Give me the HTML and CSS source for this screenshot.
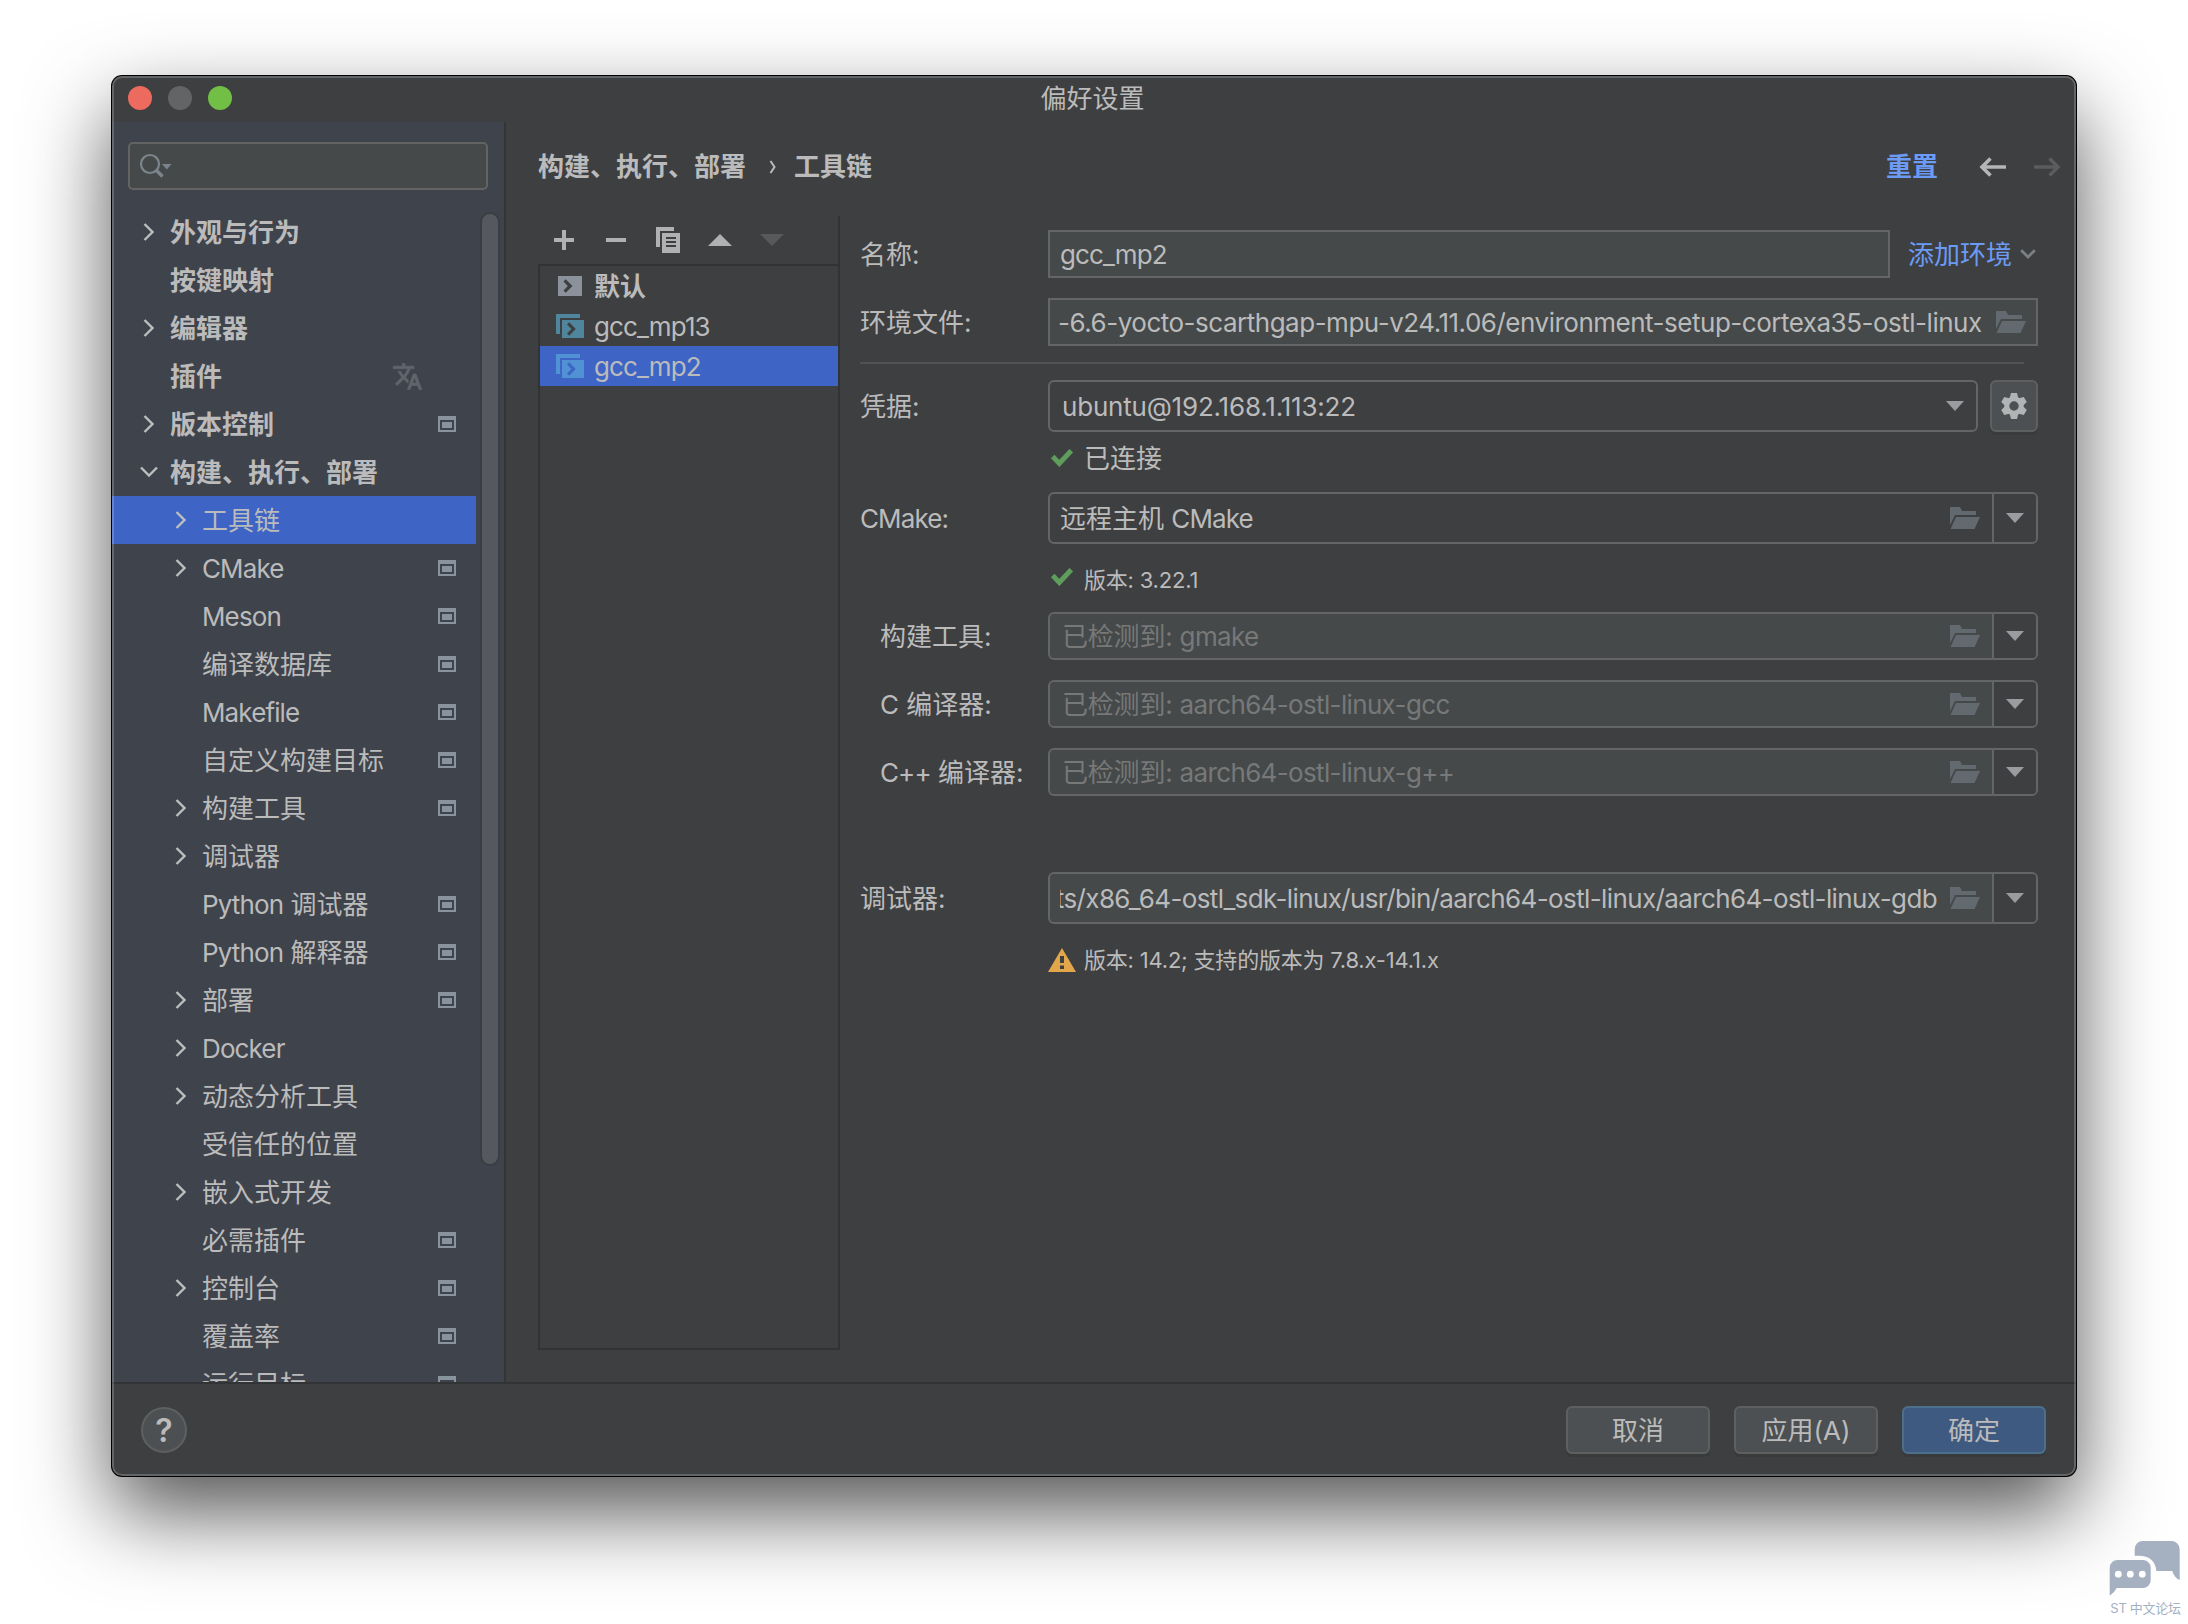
FILE: index.html
```html
<!DOCTYPE html>
<html lang="zh-CN">
<head>
<meta charset="utf-8">
<title>偏好设置</title>
<link rel="stylesheet" href="styles.css">
</head>
<body>
<svg class="defs" width="0" height="0">
  <symbol id="right" viewBox="0 0 12 20"><path d="M1.5 2l8 8-8 8" fill="none" stroke="currentColor" stroke-width="2.4"/></symbol>
  <symbol id="down" viewBox="0 0 20 12"><path d="M2 1.5l8 8 8-8" fill="none" stroke="currentColor" stroke-width="2.4"/></symbol>
  <symbol id="scope" viewBox="0 0 18 16"><path fill-rule="evenodd" fill="currentColor" d="M0 0h18v16H0zM2 4v10h14V4z"/><path fill="currentColor" d="M4 6h10v6H4z"/></symbol>
  <symbol id="folder" viewBox="0 0 30 22"><path fill="currentColor" d="M0 0h10l2 4h14v4H5L0 18zM6 10h24l-5.5 12H.5z"/></symbol>
  <symbol id="tri" viewBox="0 0 18 10"><path fill="currentColor" d="M0 0h18L9 10z"/></symbol>
  <symbol id="check" viewBox="0 0 22 18"><path fill="none" stroke="#5e9d5b" stroke-width="5" d="M1.7 7.5L8.3 14.5 20.3 1.7"/></symbol>
  <symbol id="chain" viewBox="0 0 28 24"><path fill="currentColor" d="M0 0h24v4H4v16H0z"/><path fill="currentColor" fill-rule="evenodd" d="M6 6h22v18H6zM11 10.5l4.4 4.5-4.4 4.5 2.2 2.2 6.6-6.7-6.6-6.7z"/></symbol>
</svg>

<div class="window">
  <div class="titlebar">
    <div class="lights"><i class="red"></i><i class="gray"></i><i class="green"></i></div>
    <h1>偏好设置</h1>
  </div>

  <div class="content">
    <nav class="sidebar">
      <div class="search">
        <svg width="34" height="26" viewBox="0 0 34 26"><circle cx="11" cy="11" r="9" fill="none" stroke="#7d858c" stroke-width="2.2"/><path d="M17 17l6.5 6.5" stroke="#7d858c" stroke-width="3.4"/><path d="M23 11h9.500l-4.700 5.500z" fill="#7d858c"/></svg>
      </div>
      <ul class="tree">
        <li class="top"><svg class="ar"><use href="#right"/></svg><span>外观与行为</span></li>
        <li class="top"><span>按键映射</span></li>
        <li class="top"><svg class="ar"><use href="#right"/></svg><span>编辑器</span></li>
        <li class="top"><span>插件</span><svg class="lang" viewBox="0 0 24 24"><path d="M12.87 15.07l-2.540-2.510.030-.030A17.520 17.520 0 0 0 14.070 6H17V4h-7V2H8v2H1v2h11.170C11.500 7.920 10.440 9.750 9 11.350 8.070 10.320 7.300 9.190 6.690 8h-2c.730 1.630 1.730 3.170 2.980 4.560l-5.090 5.020L4 19l5-5 3.110 3.110.760-2.040zM18.500 10h-2L12 22h2l1.120-3h4.750L21 22h2l-4.500-12zm-2.620 7l1.620-4.330L19.120 17h-3.240z"/></svg></li>
        <li class="top"><svg class="ar"><use href="#right"/></svg><span>版本控制</span><svg class="sc"><use href="#scope"/></svg></li>
        <li class="top"><svg class="ar open"><use href="#down"/></svg><span>构建、执行、部署</span></li>
        <li class="selected"><svg class="ar"><use href="#right"/></svg><span>工具链</span></li>
        <li><svg class="ar"><use href="#right"/></svg><span class="en">CMake</span><svg class="sc"><use href="#scope"/></svg></li>
        <li><span class="en">Meson</span><svg class="sc"><use href="#scope"/></svg></li>
        <li><span>编译数据库</span><svg class="sc"><use href="#scope"/></svg></li>
        <li><span class="en">Makefile</span><svg class="sc"><use href="#scope"/></svg></li>
        <li><span>自定义构建目标</span><svg class="sc"><use href="#scope"/></svg></li>
        <li><svg class="ar"><use href="#right"/></svg><span>构建工具</span><svg class="sc"><use href="#scope"/></svg></li>
        <li><svg class="ar"><use href="#right"/></svg><span>调试器</span></li>
        <li><span><em>Python</em> 调试器</span><svg class="sc"><use href="#scope"/></svg></li>
        <li><span><em>Python</em> 解释器</span><svg class="sc"><use href="#scope"/></svg></li>
        <li><svg class="ar"><use href="#right"/></svg><span>部署</span><svg class="sc"><use href="#scope"/></svg></li>
        <li><svg class="ar"><use href="#right"/></svg><span class="en">Docker</span></li>
        <li><svg class="ar"><use href="#right"/></svg><span>动态分析工具</span></li>
        <li><span>受信任的位置</span></li>
        <li><svg class="ar"><use href="#right"/></svg><span>嵌入式开发</span></li>
        <li><span>必需插件</span><svg class="sc"><use href="#scope"/></svg></li>
        <li><svg class="ar"><use href="#right"/></svg><span>控制台</span><svg class="sc"><use href="#scope"/></svg></li>
        <li><span>覆盖率</span><svg class="sc"><use href="#scope"/></svg></li>
        <li><span>运行目标</span><svg class="sc"><use href="#scope"/></svg></li>
      </ul>
      <div class="scrollbar"></div>
    </nav>

    <main>
      <header class="crumbs">
        <b>构建、执行、部署</b>
        <svg class="sep" width="8" height="14" viewBox="0 0 8 14"><path d="M1.500 1l4 6-4 6" fill="none" stroke="#bbb" stroke-width="2"/></svg>
        <b>工具链</b>
        <a class="reset">重置</a>
        <svg class="back" width="28" height="20" viewBox="0 0 28 20"><path d="M27 10H3M11.500 1.500L3 10l8.500 8.500" fill="none" stroke="#b4b5b6" stroke-width="3.600"/></svg>
        <svg class="fwd" width="28" height="20" viewBox="0 0 28 20"><path d="M1 10h24M16.500 1.500L25 10l-8.500 8.500" fill="none" stroke="#5b5c5d" stroke-width="3.600"/></svg>
      </header>

      <div class="panes">
        <section class="list">
          <div class="tools">
            <svg width="20" height="20"><path d="M8 0h4v8h8v4h-8v8H8v-8H0V8h8z" fill="#afb1b3"/></svg>
            <svg width="20" height="20"><path d="M0 8h20v4H0z" fill="#afb1b3"/></svg>
            <svg width="24" height="26"><path fill="#afb1b3" fill-rule="evenodd" d="M0 0h18v4H4v16H0zM6 6h18v20H6zM10 10v2h10v-2zM10 14v2h10v-2zM10 18v2h10v-2z"/></svg>
            <svg width="24" height="12"><path d="M0 12h24L12 0z" fill="#afb1b3"/></svg>
            <svg width="24" height="12"><path d="M0 0h24L12 12z" fill="#58595a"/></svg>
          </div>
          <div class="items">
            <div class="item first"><svg width="24" height="20"><path fill="#8b929b" fill-rule="evenodd" d="M0 0h24v20H0zM5.500 5.500l4.300 4.500-4.300 4.500L7.700 16.700 14.500 10 7.700 3.300z"/></svg><b>默认</b></div>
            <div class="item"><svg width="28" height="24" color="#4f869e"><use href="#chain"/></svg><span class="en">gcc_mp13</span></div>
            <div class="item on"><svg width="28" height="24" color="#5192d4"><use href="#chain"/></svg><span class="en">gcc_mp2</span></div>
          </div>
        </section>

        <section class="form">
          <div class="row name">
            <label>名称:</label>
            <div class="field"><span class="en">gcc_mp2</span></div>
            <a class="add"><span>添加环境</span><svg width="16" height="10" viewBox="0 0 16 10"><path d="M1.200 1.200L8 8l6.800-6.800" fill="none" stroke="#7b8085" stroke-width="2.800"/></svg></a>
          </div>
          <div class="row env">
            <label>环境文件:</label>
            <div class="field"><span class="envtext">-6.6-yocto-scarthgap-mpu-v24.11.06/environment-setup-cortexa35-ostl-linux</span><svg class="fo"><use href="#folder"/></svg></div>
          </div>
          <hr>
          <div class="row tall cred">
            <label>凭据:</label>
            <div class="field combo"><span class="host">ubuntu@192.168.1.113:22</span><svg class="tr"><use href="#tri"/></svg></div>
            <button class="gear" aria-label="设置"><svg width="28" height="28" viewBox="-14 -14 28 28" fill="#b2b3b4"><circle r="7.200" fill="none" stroke="#b2b3b4" stroke-width="5"/><path id="t" d="M-3-13h6l1.200 5h-8.400z"/><use href="#t" transform="rotate(60)"/><use href="#t" transform="rotate(120)"/><use href="#t" transform="rotate(180)"/><use href="#t" transform="rotate(240)"/><use href="#t" transform="rotate(300)"/></svg></button>
          </div>
          <div class="status connected"><svg class="ck"><use href="#check"/></svg><span>已连接</span></div>
          <div class="row tall cmake">
            <label><em>CMake</em>:</label>
            <div class="field split"><span class="val">远程主机 <em>CMake</em></span><svg class="fo"><use href="#folder"/></svg><i><svg class="tr"><use href="#tri"/></svg></i></div>
          </div>
          <div class="status small ver"><svg class="ck"><use href="#check"/></svg><span>版本: 3.22.1</span></div>
          <div class="row sub build">
            <label>构建工具:</label>
            <div class="field split dark"><span class="val hint">已检测到: <em>gmake</em></span><svg class="fo"><use href="#folder"/></svg><i><svg class="tr"><use href="#tri"/></svg></i></div>
          </div>
          <div class="row sub next">
            <label>C 编译器:</label>
            <div class="field split dark"><span class="val hint">已检测到: <em>aarch64-ostl-linux-gcc</em></span><svg class="fo"><use href="#folder"/></svg><i><svg class="tr"><use href="#tri"/></svg></i></div>
          </div>
          <div class="row sub next">
            <label><em>C++</em> 编译器:</label>
            <div class="field split dark"><span class="val hint">已检测到: <em>aarch64-ostl-linux-g++</em></span><svg class="fo"><use href="#folder"/></svg><i><svg class="tr"><use href="#tri"/></svg></i></div>
          </div>
          <div class="row tall debug">
            <label>调试器:</label>
            <div class="field split dark"><span class="val path"><span>ts/x86_64-ostl_sdk-linux/usr/bin/aarch64-ostl-linux/aarch64-ostl-linux-gdb</span></span><svg class="fo"><use href="#folder"/></svg><i><svg class="tr"><use href="#tri"/></svg></i></div>
          </div>
          <div class="status small warn"><svg width="28" height="24" viewBox="0 0 28 24"><path d="M14 0l14 24H0z" fill="#e2a64b"/><path d="M12 8h4v7h-4zM12 17.500h4v3.500h-4z" fill="#3e3f41"/></svg><span>版本: 14.2; 支持的版本为 7.8.x-14.1.x</span></div>
        </section>
      </div>
    </main>
  </div>

  <footer>
    <button class="help">?</button>
    <button class="btn">取消</button>
    <button class="btn">应用(A)</button>
    <button class="btn primary">确定</button>
  </footer>
</div>

<div class="badge">
  <svg width="72" height="58" viewBox="0 0 72 58" fill="#a5b1c1">
    <path d="M34 0h28.500a8.200 8.200 0 0 1 8.200 8.200V39q-5.500-2.500-7.500-9H47.300Q46 15.500 31 14.700h-5.300V8.200A8.200 8.200 0 0 1 34 0z"/>
    <path d="M8.500 19h25.400a7.800 7.800 0 0 1 7.800 7.800v12.400a7.800 7.800 0 0 1-7.800 7.800H7.700Q5.500 51.500.7 54.700V26.800A7.800 7.800 0 0 1 8.500 19z"/>
    <g fill="#fff"><circle cx="9.300" cy="33.200" r="3.400"/><circle cx="21.300" cy="33.200" r="3.400"/><circle cx="33.300" cy="33.200" r="3.400"/></g>
  </svg>
  <span>ST 中文论坛</span>
</div>
</body>
</html>
```

FILE: styles.css
```css
* { box-sizing: border-box; }
body {
  margin: 0;
  width: 2188px;
  height: 1624px;
  padding: 76px 0 0 112px;
  background: #fff;
  overflow: hidden;
  position: relative;
  font: 26px/36px Inter, "Noto Sans CJK SC", sans-serif;
  color: #bbb;
}
.defs { position: absolute; }
svg { display: block; flex: none; }
em { font-style: normal; }
.en, em { letter-spacing: -0.88px; }
button { font: inherit; color: inherit; padding: 0; }

.window {
  position: relative;
  width: 1964px;
  height: 1400px;
  display: flex;
  flex-direction: column;
  background: #3e3f41;
  border-radius: 10px;
  overflow: hidden;
  box-shadow: 0 0 0 1px #000, 0 36px 84px rgba(0, 0, 0, .68);
}
.window::after {
  content: "";
  position: absolute;
  inset: 0;
  border: 2px solid rgba(255, 255, 255, .2);
  border-radius: 10px;
  pointer-events: none;
}
.titlebar {
  height: 46px;
  flex: none;
  display: grid;
  grid-template-columns: 1fr auto 1fr;
  align-items: center;
  background: #3e3f40;
}
.titlebar h1 { margin: 0; padding: 0 3px 0 0; font-size: 26px; font-weight: 400; }
.lights { display: flex; gap: 16px; padding-left: 16px; margin-top: -2px; }
.lights i { width: 24px; height: 24px; border-radius: 50%; }
.red { background: #ed6a5e; }
.gray { background: #636466; }
.green { background: #71c045; }

.content { display: flex; flex: none; height: 1260px; }
.sidebar {
  position: relative;
  width: 394px;
  flex: none;
  background: #3f434c;
  border-right: 2px solid #333436;
  overflow: hidden;
}
.search {
  width: 360px;
  height: 48px;
  margin: 20px 0 18px 16px;
  padding: 9px 0 0 9px;
  background: #45494a;
  border: 2px solid #646363;
  border-radius: 5px;
}
.tree { list-style: none; margin: 0; padding: 0; width: 364px; }
.tree li {
  height: 48px;
  display: flex;
  align-items: center;
  padding: 0 20px 0 60px;
}
.tree li.top { padding-left: 28px; font-weight: 700; }
.tree li.selected { background: #3e65c6; }
.tree span { margin-left: 30px; padding-top: 2px; }
.ar { width: 12px; height: 20px; margin: 0 -12px 0 3px; color: #bdbebf; }
.tree .ar ~ span { margin-left: 27px; }
.ar.open { width: 20px; height: 12px; margin: 0 -20px 0 -1px; }
.tree .ar.open ~ span { margin-left: 31px; }
.sc { width: 18px; height: 16px; margin-left: auto; color: #89939d; }
.lang { width: 31px; height: 31px; margin: 1px 33px 0 auto; fill: #60646b; stroke: #60646b; stroke-width: .6; }
.scrollbar {
  position: absolute;
  left: 368px;
  top: 90px;
  width: 20px;
  height: 954px;
  background: #55585c;
  border: 2px solid #3a3d43;
  border-radius: 10px;
}

main { flex: 1; min-width: 0; display: flex; flex-direction: column; }
.crumbs { height: 94px; flex: none; display: flex; align-items: center; padding: 0 15px 4px 32px; }
.crumbs .sep { margin: 0 17px 0 23px; }
.reset { margin-left: auto; color: #6b9bf5; font-weight: 700; }
.back { margin-left: 41px; }
.fwd { margin-left: 26px; }

.panes { display: flex; flex: 1; }
.list { width: 302px; flex: none; height: 1134px; margin-left: 32px; border-right: 2px solid #323335; display: flex; flex-direction: column; }
.tools { height: 48px; flex: none; display: flex; align-items: center; padding-left: 16px; }
.tools svg:nth-child(2) { margin-left: 32px; }
.tools svg:nth-child(3) { margin-left: 30px; }
.tools svg:nth-child(4) { margin-left: 28px; }
.tools svg:nth-child(5) { margin-left: 28px; }
.items { flex: 1; border: 2px solid #323335; border-right: 0; }
.item { height: 40px; display: flex; align-items: center; padding-left: 16px; gap: 10px; }
.item.first { padding-left: 18px; gap: 12px; }
.item span, .item b { padding-top: 2px; }
.item.on { background: #3e65c6; }

.form { flex: 1; min-width: 0; padding: 14px 38px 0 20px; display: flex; flex-direction: column; }
.row { display: flex; align-items: center; height: 48px; }
.row.tall { height: 52px; }
.row label { width: 188px; flex: none; padding-top: 2px; }
.row.sub label { padding-left: 20px; }
.field {
  flex: 1;
  min-width: 0;
  align-self: stretch;
  display: flex;
  align-items: center;
  padding-left: 10px;
  border: 2px solid #646566;
  background: #45494a;
  white-space: nowrap;
}
.field > span, .add span, .status:not(.small) span { padding-top: 2px; }
.name .field { flex: none; width: 842px; }
.add { display: flex; align-items: center; gap: 8px; margin-left: 18px; color: #6b9bf5; }
.env { margin-top: 20px; }
.env .field { padding: 0 10px 0 8px; justify-content: space-between; }
.envtext { letter-spacing: -0.49px; }
.host { letter-spacing: -0.2px; }
hr { width: 1164px; height: 2px; margin: 16px 0; border: 0; background: #515254; flex: none; }
.combo { background: none; border-radius: 6px; justify-content: space-between; padding: 0 12px; }
.tr { width: 18px; height: 10px; color: #9b9ca0; }
.gear {
  width: 48px;
  height: 52px;
  margin-left: 12px;
  display: grid;
  place-items: center;
  background: #4c5052;
  border: 2px solid #5e6060;
  border-radius: 6px;
  box-shadow: 0 3px 0 #393a3c;
}
.status { display: flex; align-items: center; gap: 11px; height: 36px; padding-left: 191px; }
.ck { width: 22px; height: 18px; }
.connected { margin-top: 8px; }
.cmake { margin-top: 16px; }
.small { font-size: 22px; letter-spacing: -0.2px; }
.small .ck { margin-top: -4px; }
.ver { margin-top: 17px; }
.ver span { padding-top: 2px; }
.build { margin-top: 15px; }
.next { margin-top: 20px; }
.debug { margin-top: 76px; }
.warn { margin-top: 18px; padding-left: 188px; gap: 8px; }
.split { background: none; border-radius: 6px; overflow: hidden; padding-left: 0; }
.split .val { flex: 1; min-width: 0; padding-left: 10px; }
.split .fo { margin-right: 12px; }
.split i {
  width: 44px;
  align-self: stretch;
  border-left: 2px solid #646566;
  display: grid;
  place-items: center;
  background: #3e3f41;
}
.split.dark { background: #45494a; }
.hint { color: #777878; letter-spacing: -0.2px; }
.hint em { letter-spacing: -0.65px; }
.split .hint { padding-left: 12px; }
.fo { width: 30px; height: 22px; color: #626a70; }
.split .path {
  margin: 0 13px 0 10px;
  padding: 2px 0 0;
  overflow: hidden;
  display: flex;
  justify-content: flex-end;
  letter-spacing: -0.62px;
}

footer {
  flex: 1;
  border-top: 2px solid #323335;
  display: flex;
  align-items: center;
  gap: 24px;
  padding: 0 30px 0 29px;
}
.help {
  width: 46px;
  height: 46px;
  margin-right: auto;
  border: 2px solid #5e6060;
  border-radius: 50%;
  background: #4c5052;
  font-size: 32px;
  font-weight: 600;
  line-height: 44px;
}
.btn {
  width: 144px;
  height: 48px;
  padding-top: 2px;
  border: 2px solid #5e6060;
  border-radius: 6px;
  background: #4c5052;
  box-shadow: 0 3px 0 #393a3c;
}
.primary { background: #3f5a80; border-color: #4c708c; }

.badge {
  position: absolute;
  left: 2109px;
  top: 1541px;
  width: 73px;
  color: #a5b1c1;
  font-size: 13px;
  line-height: 18px;
  letter-spacing: -0.3px;
  text-align: center;
  white-space: nowrap;
}
.badge span { display: block; }
```
